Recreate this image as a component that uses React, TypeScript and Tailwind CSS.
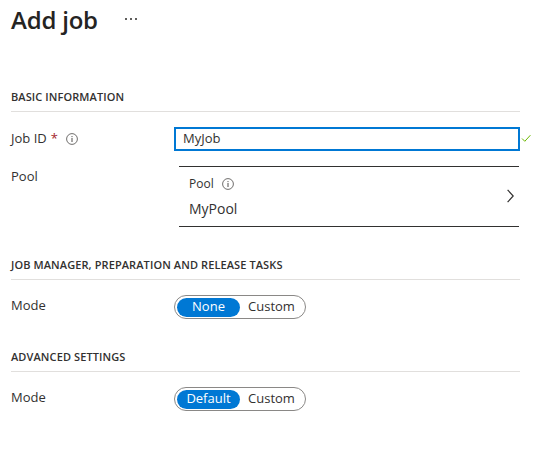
import React from "react";

const font = { fontFamily: '"Segoe UI", "Open Sans", "Noto Sans", sans-serif' };

function Info() {
  return (
    <svg width="12" height="12" viewBox="0 0 12 12" className="inline-block">
      <circle cx="6" cy="6" r="5.4" fill="none" stroke="#605e5c" strokeWidth="0.9" />
      <circle cx="6" cy="3.6" r="0.7" fill="#605e5c" />
      <rect x="5.45" y="5" width="1.1" height="4" fill="#605e5c" />
    </svg>
  );
}

function SectionHeader({ title, className }: { title: string; className?: string }) {
  return (
    <div className={`border-b border-[#e1dfdd] pb-[6px] ${className ?? ""}`}>
      <div className="text-[11px] leading-[16px] font-semibold text-[#323130] tracking-[0.1px]">{title}</div>
    </div>
  );
}

function Toggle({ a, b }: { a: string; b: string }) {
  return (
    <div className="flex h-[24px] w-[132px] items-center rounded-full border border-[#8a8886] p-[2px]">
      <div className="flex h-[19px] w-[64px] items-center justify-center rounded-full bg-[#0078d4] text-[13px] text-white">
        {a}
      </div>
      <div className="flex h-[19px] w-[64px] items-center justify-center text-[13px] text-[#323130]">{b}</div>
    </div>
  );
}

export default function App() {
  return (
    <div className="h-[457px] w-[558px] bg-white text-[#323130]" style={font}>
      <div className="pl-[11px] pr-[38px]">
        <div className="flex items-center pt-[3px]">
          <h1 className="text-[24px] leading-[34px] font-semibold text-[#252423] tracking-[-0.2px]">Add job</h1>
          <span className="ml-[27px] flex items-center gap-[3px] -mt-[3px]">
            <span className="h-[2px] w-[2px] bg-[#605e5c]" />
            <span className="h-[2px] w-[2px] bg-[#605e5c]" />
            <span className="h-[2px] w-[2px] bg-[#605e5c]" />
          </span>
        </div>

        <SectionHeader title="BASIC INFORMATION" className="mt-[52px]" />

        <div className="mt-[15px] flex items-center">
          <div className="flex w-[163px] items-center text-[13px]">
            <span>Job ID</span>
            <span className="ml-[4px] text-[#a4262c]">*</span>
            <span className="ml-[8px] flex items-center"><Info /></span>
          </div>
          <div className="relative flex h-[24px] w-[346px] items-center border-2 border-[#0078d4] px-[7px] text-[13px]">
            MyJob
            <svg className="absolute -right-[13px] top-[5px]" width="10" height="9" viewBox="0 0 10 9">
              <path d="M1 4.5 L3.8 7.3 L9.4 1.2" fill="none" stroke="#6bb700" strokeWidth="1" />
            </svg>
          </div>
        </div>

        <div className="mt-[15px] flex">
          <div className="w-[168px] pt-[1px] text-[13px] leading-[18px]">Pool</div>
          <div className="flex h-[61px] w-[340px] items-center border-y border-[#323130] pl-[10px] pr-[5px]">
            <div className="flex-1">
              <div className="flex items-center text-[12px] leading-[16px]">
                <span>Pool</span>
                <span className="ml-[8px] flex items-center"><Info /></span>
              </div>
              <div className="mt-[8px] text-[14px] leading-[18px]">MyPool</div>
            </div>
            <svg width="7" height="14" viewBox="0 0 7 14" className="mt-[-2px]">
              <path d="M0.6 0.8 L6.2 7 L0.6 13.2" fill="none" stroke="#323130" strokeWidth="1.2" />
            </svg>
          </div>
        </div>

        <SectionHeader title="JOB MANAGER, PREPARATION AND RELEASE TASKS" className="mt-[30px]" />

        <div className="mt-[15px] flex items-center">
          <div className="w-[163px] text-[13px] -mt-[3px]">Mode</div>
          <Toggle a="None" b="Custom" />
        </div>

        <SectionHeader title="ADVANCED SETTINGS" className="mt-[30px]" />

        <div className="mt-[15px] flex items-center">
          <div className="w-[163px] text-[13px] -mt-[3px]">Mode</div>
          <Toggle a="Default" b="Custom" />
        </div>
      </div>
    </div>
  );
}
